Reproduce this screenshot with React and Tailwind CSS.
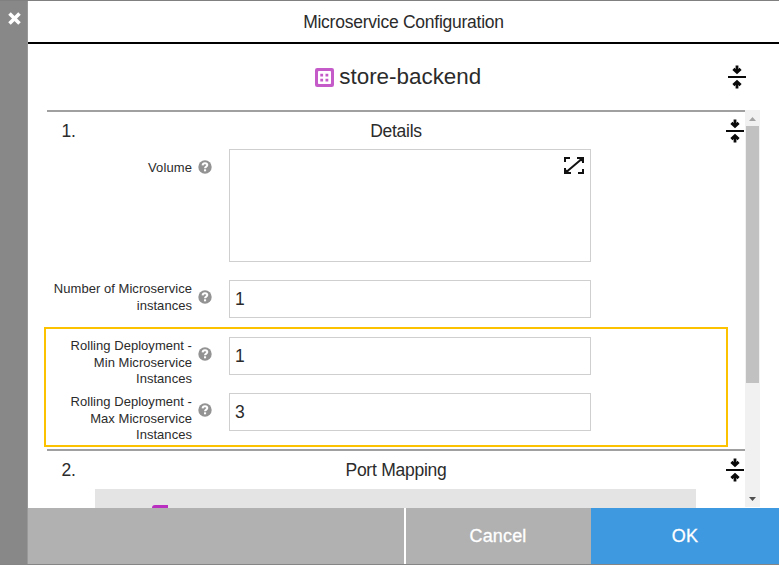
function CollapseIcon() {
  return (
    <svg width="18" height="24" viewBox="0 0 18 24" className="block shrink-0" fill="none" stroke="#0a0a0a">
      <path d="M0 12H18" strokeWidth="2" />
      <path d="M9 0.5V6M9 23.5V18" strokeWidth="2.8" />
      <path d="M5.4 3.8L9 7.1L12.6 3.8M5.4 20.2L9 16.9L12.6 20.2" strokeWidth="3" />
    </svg>
  );
}

function HelpIcon() {
  return (
    <svg width="14" height="14" viewBox="0 0 14 14" className="block shrink-0">
      <circle cx="7" cy="7" r="6.7" fill="#939393" />
      <path d="M4.6 5.4C4.7 3.9 5.8 3.2 7 3.2C8.5 3.2 9.3 4.1 9.3 5.1C9.3 6.6 7 6.6 7 8.3" fill="none" stroke="#fff" strokeWidth="2" />
      <rect x="6" y="9.3" width="2.1" height="2" fill="#fff" />
    </svg>
  );
}

function ExpandIcon() {
  return (
    <svg width="20" height="17" viewBox="0 0 20 17" className="block" fill="none" stroke="#111" strokeWidth="2">
      <path d="M1 5V1H6M13 1H19V6M1 11V16H7M14 16H19V12M2 15.2L18 1.8" />
      <path d="M14 1H19V5.5ZM1 11.5V16H6Z" fill="#111" stroke="none" />
    </svg>
  );
}

function ServiceIcon() {
  return (
    <svg width="19" height="19" viewBox="0 0 19 19" className="block shrink-0">
      <rect width="19" height="19" rx="2.2" fill="#c45bc9" />
      <rect x="3" y="3" width="13" height="13" rx="0.8" fill="#fff" />
      <path d="M5.3 5.7h2.8v2.8H5.3zM10.5 5.7h2.8v2.8h-2.8zM5.3 10.7h2.8v2.8H5.3zM10.5 10.7h2.8v2.8h-2.8z" fill="#c45bc9" />
    </svg>
  );
}

function SectionHeader({ number, title }) {
  return (
    <div className="flex h-10 items-center border-t-2 border-[#a0a0a0]">
      <span className="w-[60px] pl-[14.5px]">{number}</span>
      <span className="flex-1 text-center">{title}</span>
      <span className="flex w-[60px] justify-end pr-px">
        <CollapseIcon />
      </span>
    </div>
  );
}

function Field({ lines, value, className }) {
  return (
    <div className={`flex h-[38px] ${className}`}>
      <div className="w-[145px] pt-px text-right text-[13px] leading-[16.5px] tracking-[0.04px]">
        {lines.map((line) => (
          <div key={line} className="whitespace-nowrap">{line}</div>
        ))}
      </div>
      <div className="ml-1.5 pt-[10px]">
        <HelpIcon />
      </div>
      <div className="ml-[17px] flex h-[38px] w-[362px] items-center border border-[#cfcfcf] pl-[5px] text-[17.5px]">{value}</div>
    </div>
  );
}

export default function App() {
  return (
    <div className="flex h-[565px] w-[779px] flex-col overflow-hidden border-t border-[#808080] bg-white text-[17.5px] leading-5 tracking-[-0.25px] text-[#2b2b2b] [font-family:'Liberation_Sans',Arial,sans-serif]">
      <div className="flex min-h-0 flex-1">
        <aside className="w-7 shrink-0 border-r border-[#999] bg-[#888] pl-2 pt-[11px]">
          <svg width="13" height="13" viewBox="0 0 13 13" className="block">
            <path d="M1.5 1.5L11.5 11.5M11.5 1.5L1.5 11.5" stroke="#fff" strokeWidth="3.6" />
          </svg>
        </aside>
        <main className="flex min-w-0 flex-1 flex-col">
          <header className="flex h-[43px] shrink-0 items-center justify-center border-b-2 border-black">Microservice Configuration</header>
          <div className="flex h-[66px] shrink-0 items-center pl-[19px] pr-[33.5px]">
            <div className="flex flex-1 items-center justify-center gap-[5px] pl-[22px] text-[22.4px] tracking-normal">
              <ServiceIcon />
              <h1>store-backend</h1>
            </div>
            <CollapseIcon />
          </div>
          <div className="flex h-[398px] shrink-0 overflow-hidden pl-[19px]">
            <div className="relative w-[698px] shrink-0">
              <SectionHeader number="1." title="Details" />
              <div className="flex h-[112px]">
                <div className="w-[145px] pt-[9px] text-right text-[13px] leading-[17px] tracking-[0.1px]">Volume</div>
                <div className="ml-1.5 pt-[10px]">
                  <HelpIcon />
                </div>
                <div className="-mt-px ml-[17px] flex h-[113px] w-[362px] items-start justify-end border border-[#cfcfcf] pr-[6px] pt-[7px]">
                  <ExpandIcon />
                </div>
              </div>
              <Field className="mt-[18px]" lines={["Number of Microservice", "instances"]} value="1" />
              <Field className="mt-[19px]" lines={["Rolling Deployment -", "Min Microservice", "Instances"]} value="1" />
              <Field className="mt-[18px]" lines={["Rolling Deployment -", "Max Microservice", "Instances"]} value="3" />
              <div className="absolute -left-[3px] top-[217px] h-[120px] w-[684px] border-2 border-[#fcc200]" />
              <div className="mt-[18px]">
                <SectionHeader number="2." title="Port Mapping" />
              </div>
              <div className="ml-12 mr-[49px] h-[19px] bg-[#e4e4e4] pl-[57px] pt-4">
                <div className="h-[3px] w-4 rounded-tl-[3px] bg-[#b92fc0]" />
              </div>
            </div>
            <div className="flex h-[397px] w-[15px] shrink-0 flex-col items-center bg-[#f1f1f1]">
              <svg width="15" height="16" className="block shrink-0">
                <path d="M4 11L7.5 7L11 11Z" fill="#a3a3a3" />
              </svg>
              <div className="h-[257px] w-[13px] bg-[#c1c1c1]" />
              <svg width="15" height="15" className="mt-auto block shrink-0">
                <path d="M4 5L7.5 9L11 5Z" fill="#505050" />
              </svg>
            </div>
          </div>
          <footer className="flex min-h-0 flex-1 text-[18px] tracking-[0.15px] text-white [-webkit-text-stroke:0.3px_white]">
            <div className="w-[376px] bg-[#b1b1b1]" />
            <button className="ml-0.5 flex w-[185px] items-center justify-center bg-[#b1b1b1] pr-px">Cancel</button>
            <button className="flex flex-1 items-center justify-center bg-[#3f99e0]">OK</button>
          </footer>
        </main>
      </div>
      <div className="h-px shrink-0 bg-[#858585]" />
    </div>
  );
}
